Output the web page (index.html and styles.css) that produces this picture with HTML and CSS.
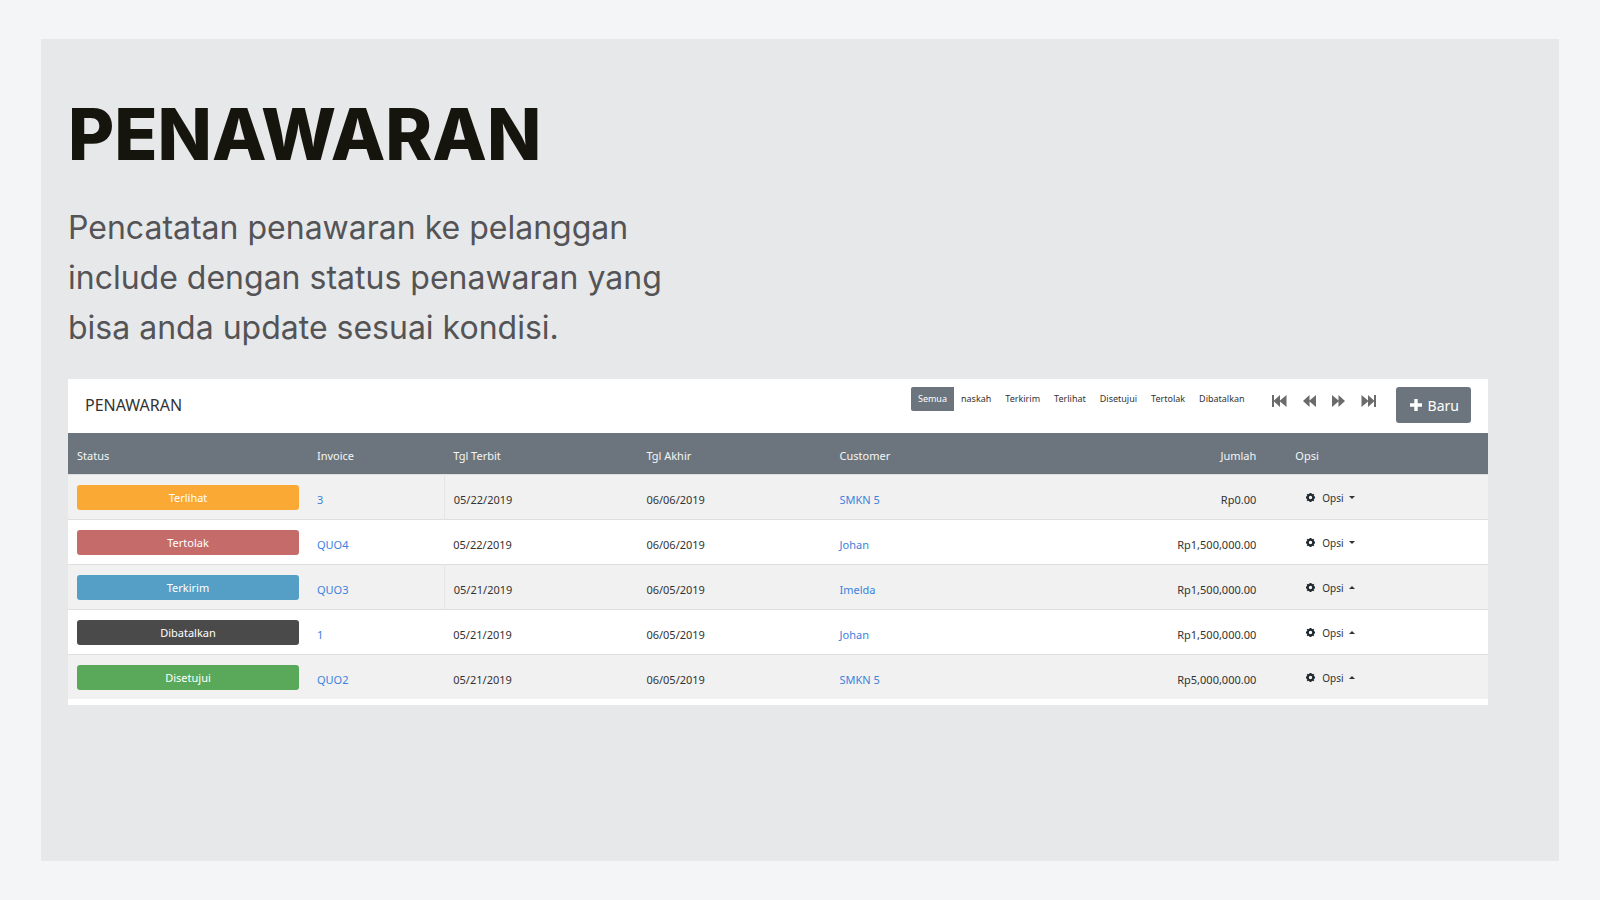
FILE: index.html
```html
<!DOCTYPE html>
<html lang="id">
<head>
<meta charset="utf-8">
<meta name="viewport" content="width=device-width, initial-scale=1">
<title>Penawaran</title>
<link rel="stylesheet" href="styles.css">
</head>
<body>
<svg class="sprite" aria-hidden="true">
  <symbol id="gear" viewBox="0 0 16 16"><path fill-rule="evenodd" d="M6.300 0h3.400l.4 1.900 1 .4L12.800 1.200l2 2-1.100 1.700.4 1 1.900.4v3.400l-1.900.4-.4 1 1.100 1.700-2 2-1.700-1.100-1 .4-.4 1.900H6.300l-.4-1.900-1-.4-1.700 1.100-2-2 1.100-1.700-.4-1L0 9.700V6.300l1.900-.4.4-1L1.200 3.200l2-2 1.700 1.100 1-.4zM8 5a3 3 0 1 0 0 6 3 3 0 0 0 0-6z"/></symbol>
  <symbol id="first" viewBox="0 0 15 12"><path d="M0 0h2v5.500L8 0v5.500L14.500 0v12L8 6.500V12L2 6.500V12H0z"/></symbol>
  <symbol id="prev" viewBox="0 0 13 12"><path d="M0 6 6.500 0v5.500L13 0v12L6.500 6.500V12z"/></symbol>
  <symbol id="next" viewBox="0 0 13 12"><path d="M13 6 6.500 0v5.500L0 0v12l6.500-5.500V12z"/></symbol>
  <symbol id="last" viewBox="0 0 15 12"><path d="M15 0h-2v5.500L7 0v5.500L.5 0v12L7 6.500V12l6-5.500V12h2z"/></symbol>
  <symbol id="plus" viewBox="0 0 12 12"><path d="M4.300 0h3.400v4.300H12v3.400H7.700V12H4.300V7.700H0V4.300h4.300z"/></symbol>
  <symbol id="down" viewBox="0 0 6 3"><path d="M0 0h6L3 3z"/></symbol>
  <symbol id="up" viewBox="0 0 6 3"><path d="M0 3h6L3 0z"/></symbol>
</svg>
<main class="panel">
  <h1 class="title">PENAWARAN</h1>
  <p class="lead">Pencatatan penawaran ke pelanggan include dengan status penawaran yang bisa anda update sesuai kondisi.</p>
  <section class="card">
    <header class="toolbar">
      <h2 class="heading">PENAWARAN</h2>
      <nav class="filters">
        <a class="filter active" href="#">Semua</a>
        <a class="filter" href="#">naskah</a>
        <a class="filter" href="#">Terkirim</a>
        <a class="filter" href="#">Terlihat</a>
        <a class="filter" href="#">Disetujui</a>
        <a class="filter" href="#">Tertolak</a>
        <a class="filter" href="#">Dibatalkan</a>
      </nav>
      <div class="pager">
        <button class="page" aria-label="Pertama"><svg class="end"><use href="#first"/></svg></button>
        <button class="page" aria-label="Sebelumnya"><svg class="step"><use href="#prev"/></svg></button>
        <button class="page" aria-label="Berikutnya"><svg class="step"><use href="#next"/></svg></button>
        <button class="page" aria-label="Terakhir"><svg class="end"><use href="#last"/></svg></button>
      </div>
      <button class="new"><svg class="plus"><use href="#plus"/></svg>Baru</button>
    </header>
    <table class="quotes">
      <colgroup><col class="c-status"><col class="c-invoice"><col class="c-date"><col class="c-date"><col class="c-customer"><col class="c-amount"><col></colgroup>
      <thead>
        <tr><th>Status</th><th>Invoice</th><th>Tgl Terbit</th><th>Tgl Akhir</th><th>Customer</th><th class="amount">Jumlah</th><th>Opsi</th></tr>
      </thead>
      <tbody>
        <tr><td><span class="badge viewed">Terlihat</span></td><td class="ruled"><a href="#">3</a></td><td>05/22/2019</td><td>06/06/2019</td><td><a href="#">SMKN 5</a></td><td class="amount">Rp0.00</td><td><button class="options"><svg class="gear"><use href="#gear"/></svg>Opsi<svg class="caret"><use href="#down"/></svg></button></td></tr>
        <tr><td><span class="badge rejected">Tertolak</span></td><td><a href="#">QUO4</a></td><td>05/22/2019</td><td>06/06/2019</td><td><a href="#">Johan</a></td><td class="amount">Rp1,500,000.00</td><td><button class="options"><svg class="gear"><use href="#gear"/></svg>Opsi<svg class="caret"><use href="#down"/></svg></button></td></tr>
        <tr><td><span class="badge sent">Terkirim</span></td><td class="ruled"><a href="#">QUO3</a></td><td>05/21/2019</td><td>06/05/2019</td><td><a href="#">Imelda</a></td><td class="amount">Rp1,500,000.00</td><td><button class="options"><svg class="gear"><use href="#gear"/></svg>Opsi<svg class="caret"><use href="#up"/></svg></button></td></tr>
        <tr><td><span class="badge canceled">Dibatalkan</span></td><td><a href="#">1</a></td><td>05/21/2019</td><td>06/05/2019</td><td><a href="#">Johan</a></td><td class="amount">Rp1,500,000.00</td><td><button class="options"><svg class="gear"><use href="#gear"/></svg>Opsi<svg class="caret"><use href="#up"/></svg></button></td></tr>
        <tr><td><span class="badge approved">Disetujui</span></td><td><a href="#">QUO2</a></td><td>05/21/2019</td><td>06/05/2019</td><td><a href="#">SMKN 5</a></td><td class="amount">Rp5,000,000.00</td><td><button class="options"><svg class="gear"><use href="#gear"/></svg>Opsi<svg class="caret"><use href="#up"/></svg></button></td></tr>
      </tbody>
    </table>
  </section>
</main>
</body>
</html>
```
FILE: styles.css
```css
* { box-sizing: border-box; }
body {
  margin: 0;
  min-height: 100vh;
  display: flex;
  padding: 39px 41px;
  background: #f3f5f7;
  color: #333;
  font-family: "Noto Sans", "Open Sans", sans-serif;
  font-size: 11px;
}
svg { display: block; fill: currentColor; }
.sprite { display: none; }
a { color: #3b82dd; text-decoration: none; }
button { font: inherit; color: inherit; border: 0; background: none; padding: 0; }
.panel { flex: 1; min-width: 0; padding: 55px 71px 40px 27px; background: #e7e8ea; }
.title {
  margin: 0;
  color: #15150d;
  font: 800 71px/80px Inter, sans-serif;
}
.lead {
  margin: 29px 0 26px;
  max-width: 640px;
  color: #545456;
  font: 400 32px/50px Inter, sans-serif;
}
.card { background: #fff; padding-bottom: 6px; }
.toolbar { display: flex; align-items: flex-start; padding: 8px 17px 10px; }
.heading { margin: 0 auto 0 0; font-size: 16px; line-height: 36px; font-weight: 400; }
.filters { display: flex; }
.filter { padding: 0 7px; font-size: 9px; line-height: 24px; color: #333; }
.active { background: #6c757d; color: #fff; border-radius: 2px 0 0 2px; }
.pager { display: flex; gap: 16px; margin: 0 20px; }
.page { height: 28px; color: #6b6b6b; }
.end { width: 15px; height: 12px; }
.step { width: 13px; height: 12px; }
.new {
  display: flex;
  align-items: center;
  gap: 6px;
  height: 36px;
  padding: 0 12px 0 14px;
  border-radius: 3px;
  background: #6c757d;
  color: #fff;
  font-size: 14px;
}
.plus { width: 12px; height: 12px; }
.quotes { width: 100%; border-collapse: collapse; table-layout: fixed; }
.c-status { width: 16.9%; }
.c-invoice { width: 9.6%; }
.c-date { width: 13.6%; }
.c-customer { width: 17%; }
.c-amount { width: 15.1%; }
th, td { padding: 0 9px; text-align: left; font-weight: 400; }
th { height: 41px; padding-top: 4px; background: #6c757d; color: #f4f5f6; }
td { height: 45px; padding-top: 5px; border-top: 1px solid #dcdee0; }
td:first-child, td:last-child { padding-top: 2px; }
tbody tr:nth-child(odd) { background: #f1f1f1; }
.amount { text-align: right; padding-right: 30px; }
.ruled { border-right: 1px solid #e4e5e6; }
.badge { display: block; border-radius: 3px; color: #fff; line-height: 25px; text-align: center; }
.viewed { background: #fba935; }
.rejected { background: #c56b69; }
.sent { background: #559fc7; }
.canceled { background: #4a4a4a; }
.approved { background: #5aa95a; }
.options { display: flex; align-items: center; padding-left: 11px; font-size: 10px; }
.gear { width: 9px; height: 9px; margin-right: 7px; color: #20282f; }
.caret { width: 6px; height: 3px; margin-left: 5px; }
```
